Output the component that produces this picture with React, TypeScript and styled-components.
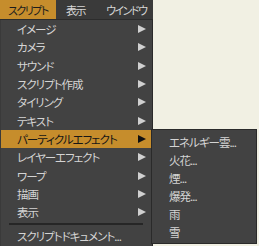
import styled, { createGlobalStyle } from "styled-components";

const GlobalStyle = createGlobalStyle`
  html, body {
    margin: 0;
    padding: 0;
    background: #f1f0e3;
  }
  body {
    font-family: "Noto Sans CJK JP", "Noto Sans", sans-serif;
    font-size: 11.5px;
    letter-spacing: -1px;
    font-feature-settings: "palt";
    -webkit-font-smoothing: antialiased;
  }
`;

const Screen = styled.div`
  position: relative;
  width: 259px;
  height: 246px;
  overflow: hidden;
  background: #f1f0e3;
`;

const Column = styled.div`
  width: 153px;
  display: flex;
  flex-direction: column;
`;

const MenuBar = styled.div`
  display: flex;
  height: 19px;
  background: #3a3a3a;
  border-bottom: 1px solid #2c2c2c;
`;

const BarItem = styled.div<{ $w: number; $pl: number; $active?: boolean }>`
  width: ${(p) => p.$w}px;
  padding-left: ${(p) => p.$pl}px;
  box-sizing: border-box;
  display: flex;
  align-items: center;
  white-space: nowrap;
  font-size: 11px;
  letter-spacing: -1.5px;
  color: ${(p) => (p.$active ? "#1c1c1c" : "#d6d6d6")};
  background: ${(p) => (p.$active ? "#c68d2c" : "transparent")};
`;

const Dropdown = styled.div`
  height: 226px;
  background: #424242;
  border-right: 1px solid #2a2a2a;
  border-left: 1px solid #3a3a3a;
  display: flex;
  flex-direction: column;
`;

const Row = styled.div<{ $active?: boolean }>`
  height: 18.3px;
  flex-shrink: 0;
  display: flex;
  align-items: center;
  justify-content: space-between;
  padding: 0 6px 0 16px;
  white-space: nowrap;
  color: ${(p) => (p.$active ? "#161616" : "#d4d4d4")};
  background: ${(p) => (p.$active ? "#c68d2c" : "transparent")};
`;

const Arrow = styled.span<{ $active?: boolean }>`
  width: 0;
  height: 0;
  border-top: 4.5px solid transparent;
  border-bottom: 4.5px solid transparent;
  border-left: 8px solid ${(p) => (p.$active ? "#111" : "#d0d0d0")};
`;

const Separator = styled.div`
  height: 2px;
  margin: 2px 9px 2px 8px;
  background: #262626;
  flex-shrink: 0;
`;

const SubMenu = styled.div`
  position: absolute;
  left: 151px;
  top: 129px;
  width: 106px;
  height: 115px;
  box-sizing: border-box;
  background: #424242;
  border: 1px solid #2a2a2a;
  padding-top: 3px;
  display: flex;
  flex-direction: column;
`;

const SubRow = styled.div`
  height: 18px;
  display: flex;
  align-items: center;
  padding-left: 17px;
  color: #d4d4d4;
  white-space: nowrap;
`;

const items = [
  "イメージ",
  "カメラ",
  "サウンド",
  "スクリプト作成",
  "タイリング",
  "テキスト",
  "パーティクルエフェクト",
  "レイヤーエフェクト",
  "ワープ",
  "描画",
  "表示",
];

const subItems = ["エネルギー雲...", "火花...", "煙...", "爆発...", "雨", "雪"];

export default function App() {
  return (
    <>
      <GlobalStyle />
      <Screen>
        <Column>
          <MenuBar>
            <BarItem $w={56} $pl={8} $active>
              スクリプト
            </BarItem>
            <BarItem $w={46} $pl={10}>
              表示
            </BarItem>
            <BarItem $w={51} $pl={4}>
              ウインドウ
            </BarItem>
          </MenuBar>
          <Dropdown>
            {items.map((label, i) => {
              const active = label === "パーティクルエフェクト";
              return (
                <Row key={i} $active={active}>
                  {label}
                  <Arrow $active={active} />
                </Row>
              );
            })}
            <Separator />
            <Row>スクリプトドキュメント...</Row>
          </Dropdown>
        </Column>
        <SubMenu>
          {subItems.map((label) => (
            <SubRow key={label}>{label}</SubRow>
          ))}
        </SubMenu>
      </Screen>
    </>
  );
}
